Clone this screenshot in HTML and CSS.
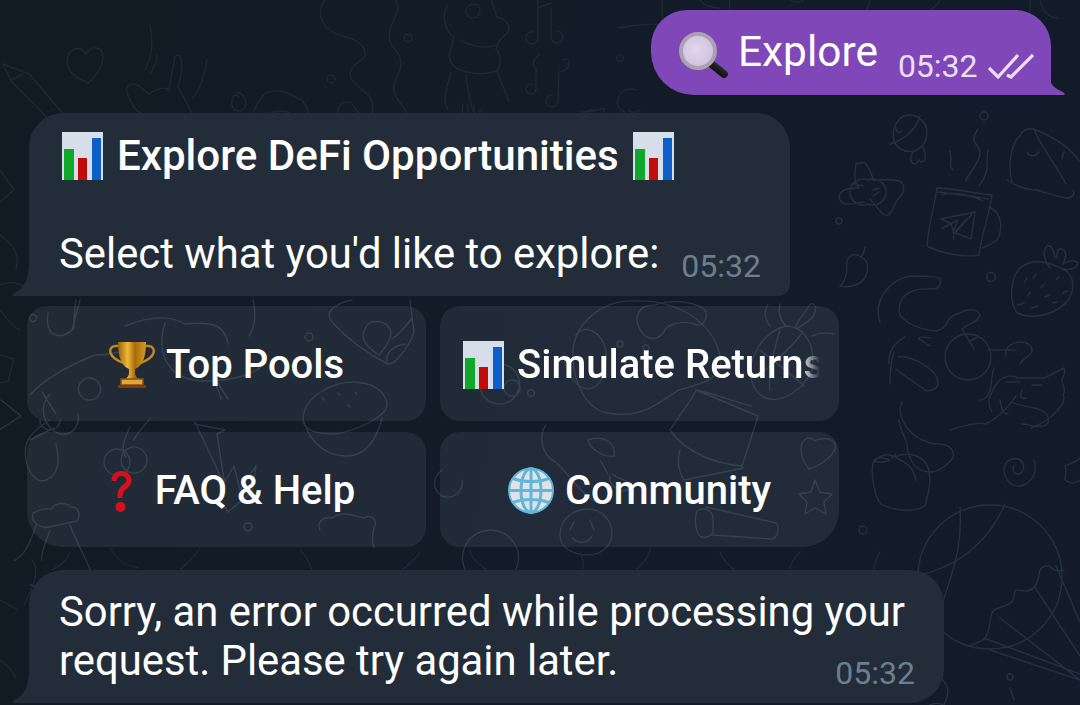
FILE: index.html
```html
<!DOCTYPE html>
<html lang="en">

<head>
  <meta charset="UTF-8" />
  <meta name="viewport" content="width=device-width, initial-scale=1.0" />
  <title>Explore</title>
  <link rel="stylesheet" href="styles.css">
</head>

<body>

  <!-- shared emoji drawings -->
  <svg class="defs" width="0" height="0">
    <defs>
      <linearGradient id="gold" x1="0" x2="1" y1="0" y2="0">
        <stop offset="0" stop-color="#9a6208" />
        <stop offset=".35" stop-color="#f0b93a" />
        <stop offset=".6" stop-color="#a86c0c" />
        <stop offset="1" stop-color="#d89a20" />
      </linearGradient>
      <linearGradient id="handle" x1="0" x2="1" y1="1" y2="0">
        <stop offset="0" stop-color="#000" />
        <stop offset=".6" stop-color="#222" />
        <stop offset="1" stop-color="#555" />
      </linearGradient>
      <radialGradient id="lens" cx=".45" cy=".45" r=".6">
        <stop offset="0" stop-color="#e2d5ec" />
        <stop offset="1" stop-color="#cfc0de" />
      </radialGradient>
      <symbol id="chart" viewBox="0 0 41 48" preserveAspectRatio="none">
        <rect width="41" height="48" fill="#d5dee9" />
        <rect x="2" y="17" width="10" height="31" fill="#0fa82a" />
        <rect x="16" y="26" width="9" height="22" fill="#c20c0c" />
        <rect x="30" y="6" width="9" height="42" fill="#0c5fc8" />
      </symbol>
      <symbol id="trophy" viewBox="0 0 46 47">
        <path d="M9 5C2 4 0 9 2 13c2 5 8 7 12 9M37 5c7-1 9 4 7 8-2 5-8 7-12 9" fill="none" stroke="#c58a1a" stroke-width="2.4" />
        <path d="M9 1h28c0 14-3 24-11 27v4c0 3 2 5 4 6H16c2-1 4-3 4-6v-4C12 25 9 15 9 1z" fill="url(#gold)" />
        <rect x="12" y="38" width="22" height="6" fill="#e0a63a" stroke="#8a4d12" stroke-width="1.5" />
        <rect x="9" y="44" width="28" height="3" fill="#7a3d10" />
      </symbol>
      <symbol id="question" viewBox="0 0 45 47">
        <path d="M13 14c0-6 4-10 10-10 6 0 10 4 10 9 0 4-2 6-5 9-3 2-4 4-4 9h-5c0-6 1-9 4-12 3-2 5-4 5-6 0-2-2-4-5-4s-5 2-5 5z" fill="#d8101c" />
        <circle cx="22" cy="40" r="5" fill="#d8101c" />
      </symbol>
      <symbol id="globe" viewBox="0 0 46 46">
        <circle cx="23" cy="23" r="22" fill="#dfe3e6" stroke="#5fb4d8" stroke-width="2" />
        <g fill="none" stroke="#62b6da" stroke-width="3">
          <ellipse cx="23" cy="23" rx="10" ry="22" />
          <path d="M23 1v44M1 23h44M5 11c10 4 26 4 36 0M5 35c10-4 26-4 36 0" />
        </g>
      </symbol>
    </defs>
  </svg>

  <div class="chat">

    <!-- background wallpaper -->
    <svg class="doodles" viewBox="0 0 1080 705">
      <g class="dim">
        <path d="M3 64l26 10 60 70-9 7-69-70z M11 80l12-6" />
        <path d="M86 82C76 78 66 72 67 60c1-11 12-16 19-6 5-9 17-8 17 3 0 10-7 19-15 26z" />
        <path d="M150 25c3 15 3 30-5 45M157 55c0 7-3 13-6 18M207 60c-2 13-6 27-14 38" />
        <path d="M175 57c5-6 8 2 6 18l-3 12 20 37c-3 10-20 12-39-2l-4-8-10 26c-16 2-19-11-10-19l8-6c-10-5-14-16-16-22-2-10 6-13 17-3l5 4c9-6 17-8 20-3l2-13z" />
        <path d="M234 120l-10 22M239 97c-3-5-8 0-7 7 0 7 9 10 13 3 3-7-2-14-9-15" />
        <path d="M222 145c13-13 20-19 24-24 10-7 8-18 20-28 14-6 26 2 37 8 9 13 9 30 8 44" />
        <circle cx="281" cy="132" r="21" /><path d="M270 122l2 8M283 120l2 7M275 138c3 5 11 4 12-3" />
        <circle cx="331" cy="79" r="4" /><circle cx="408" cy="38" r="4" /><circle cx="620" cy="58" r="3.5" />
        <path d="M325 0c-8 10-6 27 12 34 12 4 26 7 28 18 2 8-10 10-14 18-4 10 8 16 16 24 8 8 8 22-2 22s-10-16-20-14c-12 2-8 28 4 34" />
        <path d="M396 0c6 12-7 23-7 36 0 12 12 14 12 27s-9 15-7 28c1 10 12 14 13 25-1 10-14 10-14 25" />
        <path d="M447 5c-6 13-1 27 7 32l-3 12c-4 6-1 16 7 20 13 6 30 6 40 1 3-8 3-16-2-21l3-8 8-8c5-7-2-15-10-16l-6-17" />
        <circle cx="473" cy="11" r="7" /><path d="M460 40c10 6 27 10 38 4M451 72c-3 14-10 25-3 38M466 75c1 15 5 28 7 36M497 70c2 10 8 18 12 32" />
        <path d="M463 104l-1 12M468 105v12M474 105v12M480 110v8" />
        <path d="M450 118c-3 10-3 17-3 28M470 145c10-24 34-34 52-25 8 6 12 20 22 14 14-7 32-14 48-25M581 112c10 0 21-4 24-3-4 9-13 19-24 17" />
        <path d="M538 0v38a6 6 0 1 1-5-6M551 8v28a6 6 0 1 0 5-5M538 8l13-5" />
        <path d="M540 54c-8 6-8 12-4 15v20a5 5 0 1 1-5-5M563 60c8-4 8 6 2 10l-6 2-1 28a6 6 0 1 1-5-5" />
        <path d="M618 28c10-2 26-4 44-4v-24M636 90c-10-4-16 2-18 10s2 8 8 14M640 110c-6 4-9 2-12 0" />
        <path d="M700 0c4 6 10 8 20 8M730 0c-2 8 0 14 6 20M940 0c-4 8-14 14-28 14M1000 15c6 8 14 10 22 6M1030 0v25M1040 0c2 10 8 18 18 18" />
        <path d="M0 170l14 20-14 12M0 285c14-6 26 0 28 10M0 235c14 10 20 20 16 34" />
        <path d="M0 310c8 10 14 18 20 20M0 355l14 4-6 22-8 2" />
        <path d="M790 0c6 4 14 3 16-4M850 40c10-8 24-8 34 2s8 24-4 30M870 0c-2 12-10 22-22 26" />
      </g>

      <g class="mid">
        <!-- right column -->
        <path d="M909 115c10 0 18 8 18 18 0 8-4 14-12 18-9 2-18-2-21-10-3-12 4-26 15-26zM890 144c10-3 24-10 30-28M896 128c0 4 3 6 6 3M913 151c-3 6-3 11 1 13 2 0 4-2 5-4 2 3 5 2 6-1 1-4 0-8-2-12" />
        <circle cx="984" cy="116" r="4" />
        <circle cx="839" cy="221" r="3" />
        <circle cx="991" cy="277" r="4.5" />
        <path d="M859 188c-6-5-4-17-3-25 6 2 6-3 10 1 4 5 6 12 8 17M859 188c-6 0-14 1-16 3-6 3-5 11 3 13 8 1 14-2 18-2M855 184l8 2M872 180c10 0 20-1 28 1 6 4 4 13-2 18-5 8-6 14-10 16-6 2-11-9-18-16M868 180a13 13 0 1 0 0 24 13 13 0 1 0 0-24zM873 190l6-2M873 196l6-4" />
        <path d="M865 247c-1 5-2 8-4 10-7-6-15 0-14 8 0 8-2 17-7 21 9 2 24 0 27-14 2-8-1-13-6-15" />
        <path d="M937 188c-3 20-9 40-10 58 14 7 36 12 52 9 2-18 10-40 13-60-20-2-40-7-55-7zM938 192c15 2 37 4 50 7M942 195c8-4 30 0 41 6M989 207c12 5 15 20 8 33-5 4-9 6-15 8" />
        <path d="M954 239c-1-6 0-12-4-16l-9-4 34-7-4 27-18-7 5-12-16 8M966 220l-12 13M973 213l-18 20" />
        <path d="M953 170c-3-3-3-6-2-10 0-4-1-6-1-9M966 181c-1-4 14-17 14-28 0-8-7-8-6-16 1-4 3-6 4-8M979 186c6-8 9-15 8-22 0-6 0-11 1-14" />
        <path d="M1007 180c10 6 18 10 30 10 10 3 20 7 30 8 6 0 8-4 6-8M1012 182c-4-14-2-38 8-46 2-6 8-8 14-7 12 5 34 15 45 32M1034 129c6 16 18 30 32 55M1027 152c2 4 8 6 12 0M1064 151l-2 8" />
        <path d="M1033 262c-10 2-18 8-20 20-3 12-1 23 4 31 18 8 42 0 52-14 6-10 5-22-3-28-10-6-23-10-33-9zM1050 268c-6-8-8-17-3-22 5-1 7 5 8 12M1057 258c-1-6 2-12 7-8 3 3 1 10-1 14M1063 264c5-4 12-4 15-1-1 5-8 8-15 6" />
        <path d="M1024 283l3-5M1036 274l-3 4M1041 287l4-3M1028 296l2-4M1018 305l6-2M1045 297l5-2M1056 280l3-3M1063 293l4-2M1032 308l6-2M1053 303l4-1" />
        <path d="M880 322c-7-20 8-42 30-46 16 0 26 0 30 3 2 6-2 10-8 10-18-1-32 4-33 20-1 10 15 20 37 22 16-4 5-12 24-18 8-5 18-4 20 2-2 8-12 8-18 14l12 20M905 337c-10 6-17 13-16 27" />
        <path d="M894 352c-3 10-4 24-4 32M898 357c12-2 40 12 40 26 0 5-6 8-12 8-9-8-24-16-30-22M978 337l-8 4M930 338c-10-2-12 0-11 1l11 7" />
        <circle cx="968" cy="357" r="23" />
        <path d="M988 350h28M1006 356c-2-8 6-14 14-14 8 0 12 4 12 8-1 8-10 8-12 14M994 368c-4 10 0 30-14 32" />
        <path d="M1018 378c-8-4-18-2-24 10-4 8-8 14-2 24M1018 378l26 0 20-10c3 6-3 10-2 14 2 5 4 10 1 12 2 6 0 10-2 12-4 6-14 16-30 22M1006 382l14 0M1022 390c-3 6 0 10 4 8M1032 385l10 0" />
        <path d="M902 402c-2 5-3 8-1 14 4 12 14 24 34 28 14-1 20 6 18 14-5 6-14 14-22 14-14 0-22-10-24-26 0-8-7-14-8-26M950 430c12-4 28-8 36-6 12-6 25-20 30-28M1012 402c10 6 26 4 32 10 6 4 6 12 0 14-8 2-16-2-22-2M1000 400c2 8 2 14 8 14" />
        <path d="M873 463c-2 10 1 34 8 41 14 8 34 8 44 2 5-18 7-30 2-41-6-10-20-14-32-8-8-4-16-2-22 6zM895 457c8 4 18 8 21 23M892 458l4-4M874 460c4-4 10-2 16 0-4 2-12 4-16 0" />
        <path d="M1034 460c3 8 1 20-10 25-10 4-19-4-20-14-1-9 8-14 14-12 8 3 7 14 0 15-4 0-6-4-4-8" />
        <path d="M1080 458c-4 4-10 6-15 8 2 5 0 10 0 14 4 2 7 6 15 0" />
        <circle cx="990" cy="577" r="72" />
        <path d="M960 507c2 30-2 52-18 97M1005 504c-12 28-38 62-90 72M1064 570c-14 4-12-8-20-3-8 0-2 18-14 23-8 4-16-6-16 6 0 9-12 10-20 14-6 6-2 16-8 26-2 6-10 6-16 10M1000 618l80 62M1034 586l46 70M1056 566l24 56M984 638l96 36M990 650l90 30" />
        <circle cx="1010" cy="677" r="3" />
        <path d="M1010 688l4 12M940 670c-2 8 6 10 8 20 0 6-2 10-4 15M930 705c8-4 12 0 14 0" />
        <circle cx="863" cy="530" r="4" />
      </g>

      <g class="btn">
        <!-- keyboard rows -->
        <circle cx="33" cy="318" r="3.5" />
        <path d="M76 300c-2 12-2 22-2 28-10 12-30 12-26-16M80 300l-8 30" />
        <path d="M30 395c18-20 50-34 65-40 15 0 24-2 32-6M50 394c-12 12-7 34 10 40 12 2 20-8 18-20M42 392l14 22M90 400a11 11 0 1 0-1 0zM40 420a10 10 0 0 0 20 0" />
        <path d="M125 326c20-8 43-12 60-2 22-2 40-2 43 20M165 323c-12 40 12 58 40 58 26 0 50-6 60-18M214 381c4 8 6 13 7 18M228 399l-14-22M253 300c4 18 0 30-4 36" />
        <circle cx="309" cy="337" r="4" />
        <path d="M352 300c-18 4-28 12-20 22 18 20 40 34 56 42 6 2 22-18 26-32l-4-32M365 329c3-10 20-10 25 0 3 10-4 17-11 26-12-8-20-16-14-26zM405 344c-14 2-20 10-18 20M412 318c-6 8-12 16-20 21" />
        <path d="M303 420c0-24 30-38 50-38 20 0 34 10 34 24-3 12-30 24-51 28-20 0-33-4-33-14zM304 422c6 20 22 34 42 34 18 0 30-14 36-38M322 398l2 2M338 393l2 2M348 405l2 2M355 392l2 2" />
        <path d="M130 427c-6 12-10 24-4 30M134 440c4-10 12-14 16-22M130 462a13 13 0 1 0 0 .1M147 460a13 13 0 1 0 0 .1" />
        <path d="M50 420c-16 10-28 20-24 40 2 12 10 24 20 20 16-6 12-26 10-36M30 440l24-12M1 400l20 16-22 14" />
        <path d="M195 424l30 6-8 4 8 52-30-64zM220 490l14-24 6 24 16-24-4 26-24 20-10-14" />
        <circle cx="248" cy="527" r="4" />
        <path d="M33 513c6-2 10-6 18-4 6-8 16-6 20-2 8 0 10 8 6 14l-28 6c-8 2-18-4-16-14zM36 525c-6 20-12 30-22 36M70 525c5 14 14 30 20 44-10 12-44 20-60 16M50 530c-4 12-10 24-8 30" />
        <path d="M320 530c-4-8 4-14 12-12 10-8 22-2 32 0 8-4 14 2 10 10-2 8-2 14 0 20" />
        <path d="M573 357c-2-34 32-58 60-56 40-2 82 18 88 60 0 22-30 24-44 30-20 14-38 28-70 22-20-4-34-30-34-56z" />
        <path d="M644 335c-12-14-8-30 10-30 18-6 38-4 50 4 6 6 0 20-10 15-10-4-28 0-30 8-6 8-14 8-20 3z" />
        <path d="M576 335c8-12 26-4 30 16 2 20-4 36-18 38-16-2-24-22-24-36" />
        <circle cx="620" cy="344" r="3" /><circle cx="646" cy="348" r="3" /><circle cx="531" cy="393" r="3.5" />
        <path d="M500 364a20 20 0 1 1-1 0zM512 380a8 8 0 1 1-.1 0z" />
        <path d="M752 382c-6-22 10-50 34-56 20 0 30 22 26 44-8 20-32 34-46 28-6-2-12-8-14-16zM760 350c12 10 34 26 44 36M780 330c-6 20-12 46-10 60M755 378c14-10 36-30 48-46M786 326c-6-6-8-14-6-22M796 326c2-6 10-14 14-22 8-2 6 8 2 14-4 4-10 8-14 10M770 326c-6-8-6-14-2-22M812 336c8-4 14-4 22-2" />
        <path d="M670 430c16-24 24-34 26-40l62 26c-6 20-12 38-16 50-24-2-56-12-72-36zM680 450c-4 14 0 24 4 30l60-12M696 390c20 4 44 14 56 16" />
        <path d="M546 425c-8 10-4 30 8 36 12 8 26 34 44 42M588 440c16-6 28 4 26 16-8 2-24-6-26-16zM612 474c4 4 12 4 18 10 2 6-6 8-12 6M600 460l8 14M610 476c-2 8 6 14 10 12" />
        <path d="M815 441c-6-6-14-2-14 8 0 8 4 14 8 20 8-2 22-10 26-20 2-8-6-12-14-10-2 0-4 0-6 2z" />
        <path d="M815 480l5 12 12 2-8 8 2 12-11-6-10 6 2-12-8-8 12-2z" />
        <path d="M697 511c6-4 14-2 16 6v16c-6 6-14 6-16-2-2-6-2-14 0-20zM706 507l70 16c4 4 2 14-4 16l-60-4" />
        <path d="M560 535c0-16 14-26 28-26 14 0 24 12 24 24 0 14-12 22-24 22-16 0-28-8-28-20zM574 522l-4 8M590 520l4 10M572 538c6 6 16 6 20-2" />
        <path d="M442 470c-10 8-10 20 0 26 10 4 22-4 20-16M490 530a28 28 0 1 0 1 0" />
      </g>

      <g class="dim">
        <path d="M32 560c8 10 2 26-8 45M70 552c-2 8-10 14-18 18M110 548c6 10 16 18 28 20M200 548c-4 8-12 14-20 22M300 550c6 6 10 14 12 20M420 552c-4 6-10 12-18 18M470 550c0 8 8 12 16 20M580 552c4 8 4 12 2 18M650 548c0 8-6 14-14 22M720 552c2 8 8 12 14 18M800 552c-6 6-10 12-10 18M880 552c-4 6-6 12-6 18" />
        <path d="M0 600l18 10M0 660c6 4 12 10 16 18" />
      </g>
    </svg>

    <div class="msg msg-out">
      <div class="row">
        <svg class="emoji emoji-lens" viewBox="0 0 50 50">
          <path d="M31 31l15 12" stroke="url(#handle)" stroke-width="8" stroke-linecap="round" />
          <circle cx="20" cy="20" r="17" fill="url(#lens)" stroke="#a9a3ad" stroke-width="4" />
        </svg>
        <span>Explore</span>
        <span class="time">05:32</span>
        <svg class="ticks" viewBox="0 0 46 26" fill="none" stroke="#eadff4" stroke-width="3.2">
          <path d="M1 15l9 9L30 2M19 22l4 2L45 2" />
        </svg>
      </div>
      <svg class="tail tail-out" viewBox="0 0 20 30"><path d="M0 0C1 13 6 23 15 26c4 2 5 4 2 4H0z" /></svg>
    </div>

    <div class="msg msg-in msg-explore">
      <div class="title">
        <svg class="emoji emoji-chart"><use href="#chart" /></svg>
        <span>Explore DeFi Opportunities</span>
        <svg class="emoji emoji-chart"><use href="#chart" /></svg>
      </div>
      <div class="row row-last">
        <span>Select what you'd like to explore:</span>
        <span class="time">05:32</span>
      </div>
      <svg class="tail tail-in" viewBox="0 0 20 30"><path d="M17 0C16 13 12 23 4 26c-4 2-4 4-1 4h17V0z" /></svg>
    </div>

    <div class="keyboard">
      <div class="key">
        <svg class="emoji emoji-key"><use href="#trophy" /></svg>
        <span>Top Pools</span>
      </div>
      <div class="key key-long">
        <svg class="emoji emoji-chart"><use href="#chart" /></svg>
        <span class="key-fade">Simulate Returns</span>
      </div>
      <div class="key key-bl">
        <svg class="emoji emoji-key"><use href="#question" /></svg>
        <span>FAQ &amp; Help</span>
      </div>
      <div class="key key-br">
        <svg class="emoji emoji-key"><use href="#globe" /></svg>
        <span>Community</span>
      </div>
    </div>

    <div class="msg msg-in msg-error">
      <div>Sorry, an error occurred while processing your</div>
      <div class="row row-last">
        <span>request. Please try again later.</span>
        <span class="time">05:32</span>
      </div>
      <svg class="tail tail-in" viewBox="0 0 20 30"><path d="M17 0C16 13 12 23 4 26c-4 2-4 4-1 4h17V0z" /></svg>
    </div>

  </div>

</body>

</html>
```

FILE: styles.css
```css
* {
  box-sizing: border-box;
}

html,
body {
  margin: 0;
  padding: 0;
  height: 100%;
  overflow: hidden;
  font-family: 'Roboto', sans-serif;
  color: #fff;
  background: linear-gradient(100deg, #121b24, #131b2a);
}

.defs {
  position: absolute;
}

.chat {
  position: relative;
  width: 1080px;
  height: 705px;
  padding: 10px 0 0 0;
  display: flex;
  flex-direction: column;
  align-items: flex-start;
}

.doodles {
  position: absolute;
  top: 0;
  left: 0;
  width: 1080px;
  height: 705px;
  fill: none;
  stroke-width: 1.4;
  stroke-linecap: round;
  stroke-linejoin: round;
}

.doodles .dim {
  stroke: #1d2934;
}

.doodles .mid {
  stroke: #243140;
}

.doodles .btn {
  stroke: #28343f;
}

.msg {
  position: relative;
  font-size: 41.8px;
  line-height: 49px;
}

.msg-out {
  align-self: flex-end;
  margin-right: 29px;
  width: 400px;
  height: 85px;
  padding: 17px 0 0 27px;
  font-size: 42.4px;
  background: #8047b8;
  border-radius: 36px 36px 0 43px;
}

.msg-in {
  background: #222d39;
  margin-left: 29px;
  padding: 17px 31px 0 30px;
  border-radius: 34px 34px 12px 0;
}

.msg-explore {
  margin-top: 18px;
  width: 761px;
  height: 183px;
}

.msg-error {
  margin-top: 23px;
  width: 915px;
  height: 133px;
  border-radius: 34px 34px 34px 0;
}

.row {
  display: flex;
  align-items: flex-start;
}

.row-last {
  justify-content: space-between;
}

.title {
  display: flex;
  align-items: center;
  gap: 14px;
  height: 50px;
  margin: 0 0 49px 3px;
  font-size: 42.1px;
  font-weight: 500;
}

.title .emoji-chart {
  margin-top: 2px;
}

.time {
  font-size: 32px;
  line-height: 30px;
  color: #6d7f8f;
}

.row-last .time {
  margin: 22px -2px 0 0;
}

.msg-out .time {
  margin: 24px 0 0 20px;
  color: #eadff4;
}

.ticks {
  width: 46px;
  height: 26px;
  margin: 26px 0 0 10px;
}

.tail {
  position: absolute;
  bottom: 0;
  width: 20px;
  height: 30px;
}

.tail-out {
  right: -15px;
  fill: #8047b8;
}

.tail-in {
  left: -17px;
  fill: #222d39;
}

.emoji {
  flex: none;
  display: block;
}

.emoji-lens {
  width: 50px;
  height: 50px;
  margin: 4px 10px 0 0;
}

.emoji-chart {
  width: 41px;
  height: 48px;
}

.emoji-key {
  width: 46px;
  height: 47px;
}

.keyboard {
  position: relative;
  display: grid;
  grid-template-columns: 399px 399px;
  grid-auto-rows: 115px;
  gap: 11px 14px;
  margin: 10px 0 0 27px;
}

.key {
  display: flex;
  align-items: center;
  justify-content: center;
  gap: 11px;
  padding-top: 2px;
  font-size: 40px;
  font-weight: 500;
  white-space: nowrap;
  background: rgba(190, 215, 240, 0.09);
  border-radius: 20px;
}

.key-long {
  justify-content: flex-start;
  padding-left: 23px;
  gap: 13px;
}

.key-fade {
  flex: none;
  -webkit-mask-image: linear-gradient(to left, transparent 4px, #000 24px);
  mask-image: linear-gradient(to left, transparent 4px, #000 24px);
}

.key-bl {
  border-bottom-left-radius: 36px;
}

.key-br {
  border-bottom-right-radius: 36px;
}
```
